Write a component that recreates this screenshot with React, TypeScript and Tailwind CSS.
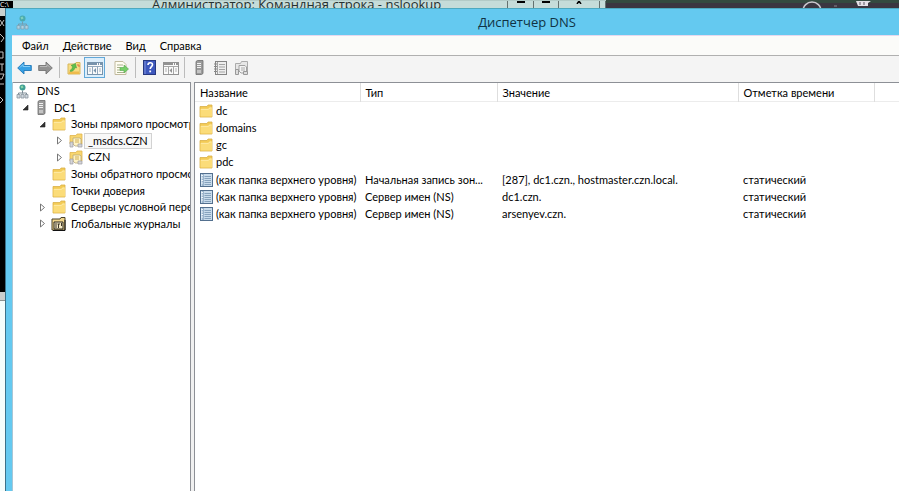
import React from "react";

function Folder() {
  return (
    <svg viewBox="0 0 14 14" className="h-[14px] w-[14px] shrink-0" aria-hidden="true">
      <path d="M1 2.500h7l1-1.500h4v12H1z" fill="#f3cb55" stroke="#d9b04a" strokeWidth=".8" />
      <path d="M1.500 5h8l1-1.500h2.500v9H1.500z" fill="#fbdc79" />
      <path d="M2 5.300h7.500l1-1.300h2" stroke="#fff0b5" fill="none" strokeWidth=".8" />
    </svg>
  );
}

function ZoneFolder() {
  return (
    <svg viewBox="0 0 14 15" className="h-[15px] w-[14px] shrink-0" aria-hidden="true">
      <path d="M1 2.500h6l1-1.500h5v10H1z" fill="#f8d66e" stroke="#dfb44e" strokeWidth=".8" />
      <path d="M4 5h7l1 1v7H6l-2-2z" fill="#fff3c4" stroke="#b9a878" strokeWidth=".8" />
      <path d="M6 7h4M6 9h4" stroke="#c39c3e" strokeWidth=".8" />
      <path d="M1 9h3v5H1zM9 11h4v3H9z" fill="#d5d5d8" stroke="#9c9ca4" strokeWidth=".7" />
    </svg>
  );
}

function Dns({ faded = false }: { faded?: boolean }) {
  return (
    <svg viewBox="0 0 13 15" className={faded ? "h-[15px] w-[13px] shrink-0 opacity-70" : "h-[15px] w-[13px] shrink-0"} aria-hidden="true">
      <circle cx="6.500" cy="3.500" r="3" fill="#3f9f94" />
      <path d="M4.500 2.500l2-1 1 2-2 1z" fill="#8fd6a8" />
      <path d="M6.500 6.500v3M2.500 11V9h8v2" stroke="#7a8a94" fill="none" />
      <path d="M1 10.500h3v3.500H1zM5 10.500h3v3.500H5zM9 10.500h3v3.500H9z" fill="#ced6dc" stroke="#8a959e" strokeWidth=".8" />
    </svg>
  );
}

function Server() {
  return (
    <svg viewBox="0 0 9 15" className="h-[15px] w-[9px] shrink-0" aria-hidden="true">
      <path d="M1 1.500L2.500.5H8v13l-1.500 1H1z" fill="#9a9a9a" stroke="#6c6c6c" strokeWidth=".8" />
      <path d="M2 3.500h4M2 5.500h4M2 7.500h4" stroke="#f0f0f0" />
      <path d="M2 10h4v3H2z" fill="#c4c4c4" />
    </svg>
  );
}

function Journal() {
  return (
    <svg viewBox="0 0 15 14" className="h-[14px] w-[15px] shrink-0" aria-hidden="true">
      <path d="M1 2h8l1-1.500h4V13H1z" fill="#efd48a" stroke="#4a4028" />
      <path d="M3 5h9v7H3z" fill="#f7ebc6" stroke="#27231c" />
      <path d="M5 6v5M6.500 7H9M7.500 7v4M10.500 6v3" stroke="#3c3528" />
      <path d="M14 3v10.500H2" stroke="#111" fill="none" />
    </svg>
  );
}

function RecordIcon() {
  return (
    <svg viewBox="0 0 13 14" className="h-[14px] w-[13px] shrink-0" aria-hidden="true">
      <rect x=".5" y=".5" width="12" height="13" fill="#c9dcec" stroke="#53708f" />
      <path d="M3 1v12" stroke="#6e8cab" />
      <path d="M4.500 3.500H11M4.500 5.500H11M4.500 7.500H11M4.500 9.500H11M4.500 11.500H11" stroke="#87a3bd" />
      <path d="M1 2.500h2M1 5h2M1 7.500h2M1 10h2" stroke="#eef5fa" />
    </svg>
  );
}

function Arrow({ back = false }: { back?: boolean }) {
  return back ? (
    <svg viewBox="0 0 15 14" className="h-[14px] w-[15px]" aria-hidden="true">
      <path d="M.7 7L7 1v3.500h7.300v5H7V13z" fill="#36a0e4" stroke="#2378b8" strokeWidth=".9" />
      <path d="M3 6.500l3-3v2h7" fill="none" stroke="#85cdf6" />
    </svg>
  ) : (
    <svg viewBox="0 0 15 14" className="h-[14px] w-[15px]" aria-hidden="true">
      <path d="M14.300 7L8 1v3.500H.7v5H8V13z" fill="#929292" stroke="#747474" strokeWidth=".9" />
      <path d="M2 5.500h7v-2l3 3" fill="none" stroke="#b9b9b9" />
    </svg>
  );
}

function UpFolder() {
  return (
    <svg viewBox="0 0 14 14" className="h-[14px] w-[14px]" aria-hidden="true">
      <path d="M1 3h7l1-1.500h4V13H1z" fill="#f6dc84" stroke="#d8b75a" />
      <path d="M2 10.500h10V13H2z" fill="#eebb4c" />
      <path d="M3.500 10.500c2 0 4-1.500 4.500-4l1.500.5L8.500 2.500 4 4.500l1.500.7c0 2-1 3.500-2.500 4.300z" fill="#5fbf4c" stroke="#3f9a40" strokeWidth=".5" />
      <path d="M10 4h2v2" stroke="#e2703c" fill="none" />
    </svg>
  );
}

function Panel({ blue = false }: { blue?: boolean }) {
  const c = blue ? "#7793ac" : "#929292";
  return (
    <svg viewBox="0 0 16 14" className="h-[14px] w-[16px]" aria-hidden="true">
      <rect x=".5" y="1.500" width="15" height="12" fill="#fafafa" stroke={c} />
      <path d="M1 3h14" stroke={c} strokeWidth="2" strokeDasharray="9 1 1 1" />
      <path d="M1 5.500h14M5.500 6v7M10.500 6v7" stroke={c} strokeWidth=".8" />
      <path d="M2 8h2M2 10h2M12 8h2M12 10h2" stroke={c} strokeWidth=".7" />
      <path d="M9 7v5L6.500 9.500z" fill={c} />
    </svg>
  );
}

function Export() {
  return (
    <svg viewBox="0 0 15 14" className="h-[14px] w-[15px]" aria-hidden="true">
      <path d="M1 .5h8l3 3v10H1z" fill="#fffdf2" stroke="#c2ba9e" />
      <path d="M3 4h6M3 6.500h3M3 9h3M3 11.500h7" stroke="#a9b08e" />
      <path d="M6 6.500h4V4l4.500 4-4.500 4V9.500H6z" fill="#77cf68" stroke="#52a64a" strokeWidth=".6" />
    </svg>
  );
}

function Help() {
  return (
    <svg viewBox="0 0 13 15" className="h-[15px] w-[13px]" aria-hidden="true">
      <rect x=".5" y=".5" width="12" height="14" fill="#3d57bd" stroke="#27387f" />
      <path d="M2 1v13" stroke="#8095dd" />
      <path d="M5 5c0-3 4.500-3 4.500-.3C9.500 6.500 7.200 6.700 7.200 9" stroke="#fff" strokeWidth="1.600" fill="none" />
      <path d="M6.300 10.500h1.800v1.800H6.300z" fill="#fff" />
    </svg>
  );
}

function Notebook() {
  return (
    <svg viewBox="0 0 13 14" className="h-[14px] w-[13px]" aria-hidden="true">
      <rect x="1.500" y=".5" width="11" height="13" fill="#eee" stroke="#858585" />
      <path d="M3.500 1v12M5 3.500h6M5 6h6M5 8.500h6M5 11h6" stroke="#a3a3a3" />
      <path d="M0 3h3M0 5.500h3M0 8h3M0 10.500h3" stroke="#888" />
    </svg>
  );
}

function NewZone() {
  return (
    <svg viewBox="0 0 13 14" className="h-[14px] w-[13px]" aria-hidden="true">
      <path d="M.5 2.500h5l1-2h6v10H.5z" fill="#e7e7e7" stroke="#ababab" />
      <path d="M4 4.500h6l1.500 1.500v6H6l-2-2z" fill="#f3f3f3" stroke="#a0a0a0" />
      <path d="M6 7h4M6 9h4" stroke="#aaa" fill="none" />
      <path d="M.5 8.500h3v5h-3zM8.500 10.500h4v3h-4z" fill="#ddd" stroke="#999" />
    </svg>
  );
}

function Twisty({ open }: { open: boolean }) {
  return (
    <svg viewBox="0 0 7 9" className="h-[9px] w-[7px]" aria-hidden="true">
      {open ? <path d="M6 2v5H1z" fill="#333" stroke="#222" strokeWidth=".6" /> : <path d="M1.500 1v7L5.500 4.500z" fill="#fff" stroke="#777" />}
    </svg>
  );
}

type Node = { label: string; pad: string; icon: React.ReactNode; open?: boolean; selected?: boolean; level: number };

const nodes: Node[] = [
  { label: "DNS", pad: "pl-0", icon: <Dns />, level: 1 },
  { label: "DC1", pad: "pl-2", icon: <Server />, open: true, level: 2 },
  { label: "Зоны прямого просмотра", pad: "pl-[25px]", icon: <Folder />, open: true, level: 3 },
  { label: "_msdcs.CZN", pad: "pl-[42px]", icon: <ZoneFolder />, open: false, selected: true, level: 4 },
  { label: "CZN", pad: "pl-[42px]", icon: <ZoneFolder />, open: false, level: 4 },
  { label: "Зоны обратного просмотра", pad: "pl-[25px]", icon: <Folder />, level: 3 },
  { label: "Точки доверия", pad: "pl-[25px]", icon: <Folder />, level: 3 },
  { label: "Серверы условной пересылки", pad: "pl-[25px]", icon: <Folder />, open: false, level: 3 },
  { label: "Глобальные журналы", pad: "pl-[25px]", icon: <Journal />, open: false, level: 3 },
];

function Tree() {
  return (
    <nav aria-label="Дерево консоли" className="w-[178px] shrink-0 overflow-hidden border-t border-r border-[#8d9096] bg-white">
      <ul role="tree" className="grid h-[149px] auto-rows-fr">
        {nodes.map((n) => (
          <li key={n.label} role="treeitem" aria-level={n.level} aria-selected={!!n.selected} aria-expanded={n.open} className={`flex min-h-0 items-center whitespace-nowrap ${n.pad}`}>
            {n.level > 1 && (
              <span className="flex w-[13px] shrink-0 items-center pl-px">
                {n.open !== undefined && (
                  <button type="button" aria-label={n.open ? "Свернуть" : "Развернуть"}>
                    <Twisty open={n.open} />
                  </button>
                )}
              </span>
            )}
            <span className={n.level === 1 ? "flex w-[19px] shrink-0 justify-center" : "flex w-[15px] shrink-0 justify-center"}>{n.icon}</span>
            <span className={n.selected ? "ml-px border border-[#d2d2d2] bg-[#f8f8f8] px-[3px] leading-[14px]" : "px-[5px] leading-[14px]"}>{n.label}</span>
          </li>
        ))}
      </ul>
    </nav>
  );
}

const same = "(как папка верхнего уровня)";
const rows: string[][] = [
  ["dc"],
  ["domains"],
  ["gc"],
  ["pdc"],
  [same, "Начальная запись зон...", "[287], dc1.czn., hostmaster.czn.local.", "статический"],
  [same, "Сервер имен (NS)", "dc1.czn.", "статический"],
  [same, "Сервер имен (NS)", "arsenyev.czn.", "статический"],
];

function Records() {
  return (
    <main className="min-w-0 flex-1 border-t border-l border-[#8d9096] bg-white">
      <table className="h-[140px] w-full table-fixed border-collapse text-left whitespace-nowrap">
        <colgroup>
          <col className="w-[165px]" />
          <col className="w-[137px]" />
          <col className="w-[241px]" />
          <col className="w-[136px]" />
          <col />
        </colgroup>
        <thead>
          <tr className="h-[18px] border-b border-[#ececec]">
            {["Название", "Тип", "Значение", "Отметка времени"].map((h) => (
              <th key={h} scope="col" className="border-r border-[#dedede] p-0 font-normal">
                <button type="button" className="block w-full pt-px pl-[5px] text-left leading-[17px]">{h}</button>
              </th>
            ))}
            <td />
          </tr>
        </thead>
        <tbody>
          {rows.map((r, i) => (
            <tr key={i}>
              <td className="p-0 pl-1">
                <div className="flex items-center gap-[3px] leading-[16px]">
                  <span className="flex w-[14px] shrink-0 justify-center">{r.length === 1 ? <Folder /> : <RecordIcon />}</span>
                  {r[0]}
                </div>
              </td>
              {[1, 2, 3].map((c) => (
                <td key={c} className="p-0 pl-[5px] leading-[16px]">{r[c]}</td>
              ))}
              <td />
            </tr>
          ))}
        </tbody>
      </table>
    </main>
  );
}

function Tool({ label, children, active }: { label: string; children: React.ReactNode; active?: boolean }) {
  return (
    <button type="button" aria-label={label} aria-pressed={active} className={`flex h-[21px] w-[21px] items-center justify-center ${active ? "border border-[#62a8d8] bg-[#dceefb]" : ""}`}>
      {children}
    </button>
  );
}

function Separator() {
  return <span className="mx-[3px] h-[21px] w-px bg-[#bcbcbc]" />;
}

function Backdrop() {
  return (
    <div className="absolute inset-0 bg-[#3b3640]">
      <div className="h-[3px] bg-[#344a3f]" />
      <svg viewBox="0 0 80 8" className="absolute top-0 left-[800px] h-2 w-20" aria-hidden="true">
        <circle cx="12" cy="11" r="9" fill="none" stroke="#c9c6cd" strokeWidth="1.500" />
        <path d="M34 6h3" stroke="#8a8690" />
        <path d="M56 1h15l-3 2v3H58z" fill="#e4e0e6" />
        <path d="M60 2v3M64 2v3" stroke="#5c5662" />
      </svg>
      <section className="absolute top-0 left-0 h-full w-[606px] bg-[#c5dcd9]">
        <div className="flex h-2 border-t border-[#b3cbc7] font-['Open_Sans','Noto_Sans',sans-serif] text-[13px] leading-[16px] text-[#26302f]">
          <span className="h-2 w-[13px] bg-black text-[7px] leading-[7px] text-white">C:\</span>
          <span className="-mt-[5px] ml-[139px] whitespace-nowrap">Администратор: Командная строка - nslookup</span>
          <div className="ml-auto flex h-2 w-[99px] border-x border-[#64716f]">
            <button type="button" aria-label="Свернуть" className="flex w-[26px] justify-center border-r border-[#64716f]"><span className="h-[2px] w-2 bg-black" /></button>
            <button type="button" aria-label="Развернуть" className="flex w-[25px] justify-center border-r border-[#64716f]"><span className="h-[2px] w-2 bg-black" /></button>
            <button type="button" aria-label="Закрыть" className="flex w-[41px] justify-center border-r border-[#64716f]">
              <svg viewBox="0 0 8 3" className="h-[3px] w-2" aria-hidden="true"><path d="M2 3l2-3 2 3" stroke="#000" fill="none" strokeWidth="1.500" /></svg>
            </button>
          </div>
        </div>
        <div className="h-[284px] w-[5px] overflow-hidden bg-black">
          <svg viewBox="0 0 5 100" className="h-[100px] w-[5px]" aria-hidden="true">
            <path d="M0 0h5v8H0z" fill="#c9d1cf" />
            <path d="M0 12l4 6M4 12l-4 6M0 26l4 4-3 4M0 44h3v6H0M0 56h4M2 56v7M0 66h4l-2 5H0M0 76h4M0 89l3 3-3 3" stroke="#c2c2c2" fill="none" />
          </svg>
        </div>
        <div className="h-[9px] w-[5px] border-b border-[#8d9292] bg-[#cbcecd]" />
        <div className="h-full w-[5px] bg-[#f4fdfc]" />
      </section>
    </div>
  );
}

export default function App() {
  return (
    <div className="relative h-screen overflow-hidden pt-2 pl-[5px] font-['Lato','Open_Sans',sans-serif] text-[11px] text-black">
      <Backdrop />
      <div className="relative flex h-full flex-col border-l border-[#3b7189] bg-[#64c9f0]">
        <header className="flex h-[27px] shrink-0 items-center border-t border-[#4da9bf] pl-[10px]">
          <Dns faded />
          <h1 className="flex-1 pl-[126px] text-center font-['Open_Sans','Noto_Sans',sans-serif] text-[13px] leading-[18px] text-[#103344]">Диспетчер DNS</h1>
        </header>
        <div className="flex min-h-0 flex-1 flex-col pl-[6px]">
          <div role="menubar" className="flex h-[21px] shrink-0 items-center gap-[14px] border-t border-b border-t-[#e5d9ef] border-b-[#b0b0b0] bg-[#fbfbf9] pl-[10px]">
            {["Файл", "Действие", "Вид", "Справка"].map((m) => (
              <button key={m} type="button" role="menuitem" className="leading-[16px]">{m}</button>
            ))}
          </div>
          <div role="toolbar" className="flex h-[26px] shrink-0 items-start bg-[#f4f4f4] pt-px pl-[2px]">
            <Tool label="Назад"><Arrow back /></Tool>
            <Tool label="Вперед"><Arrow /></Tool>
            <Separator />
            <Tool label="Вверх"><UpFolder /></Tool>
            <Tool label="Показать дерево консоли" active><Panel blue /></Tool>
            <span className="w-[6px]" />
            <Tool label="Экспортировать список"><Export /></Tool>
            <Separator />
            <Tool label="Справка"><Help /></Tool>
            <Tool label="Показать панель действий"><Panel /></Tool>
            <Separator />
            <span className="w-px" />
            <Tool label="Новый сервер"><Server /></Tool>
            <Tool label="Новая запись"><Notebook /></Tool>
            <Tool label="Новая зона"><NewZone /></Tool>
          </div>
          <div className="flex min-h-0 flex-1 gap-[3px] border-l border-[#a8c6d6] bg-[#f0f0f0]">
            <Tree />
            <Records />
          </div>
        </div>
      </div>
    </div>
  );
}
